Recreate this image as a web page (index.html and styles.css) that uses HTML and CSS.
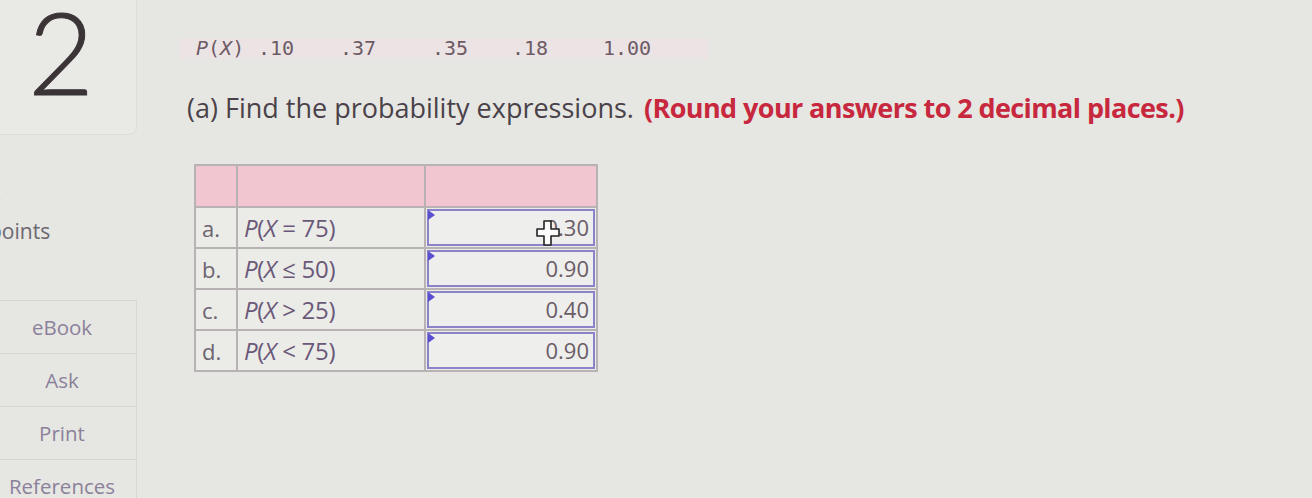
FILE: index.html
```html
<!DOCTYPE html>
<html>
<head>
<meta charset="utf-8">
<link rel="stylesheet" href="styles.css">
</head>
<body>
<div class="page">
  <aside class="sidebar">
    <div class="qnum">2</div>
    <div class="points">
      <div class="pts-num">5</div>
      <div class="pts-label">points</div>
    </div>
    <ul class="tools">
      <li>eBook</li>
      <li>Ask</li>
      <li>Print</li>
      <li>References</li>
    </ul>
  </aside>
  <main class="content">
    <div class="dist">
      <span class="c c0"><i>P</i>(<i>X</i>)</span>
      <span class="c c1">.10</span>
      <span class="c c2">.37</span>
      <span class="c c3">.35</span>
      <span class="c c4">.18</span>
      <span class="c c5">1.00</span>
    </div>
    <p class="prompt">(a) Find the probability expressions. <strong>(Round your answers to 2 decimal places.)</strong></p>
    <table class="grid">
      <tr class="head"><th class="lbl"></th><th class="expr"></th><th class="ans"></th></tr>
      <tr><td class="lbl">a.</td><td class="expr"><i>P</i>(<i>X</i> = 75)</td><td class="ans"><div class="input">0.30<span class="cursor"><svg width="26" height="28" viewBox="0 0 26 28"><path d="M9 2h7v8h8v7h-8v9H9v-9H2v-7h7z" fill="#fbfbfb" stroke="#222" stroke-width="1.6" stroke-linejoin="round"/></svg></span></div></td></tr>
      <tr><td class="lbl">b.</td><td class="expr"><i>P</i>(<i>X</i> ≤ 50)</td><td class="ans"><div class="input">0.90</div></td></tr>
      <tr><td class="lbl">c.</td><td class="expr"><i>P</i>(<i>X</i> &gt; 25)</td><td class="ans"><div class="input">0.40</div></td></tr>
      <tr><td class="lbl">d.</td><td class="expr"><i>P</i>(<i>X</i> &lt; 75)</td><td class="ans"><div class="input">0.90</div></td></tr>
    </table>
  </main>
</div>
</body>
</html>
```
FILE: styles.css
```css
html, body {
  margin: 0;
  padding: 0;
}
body {
  background: #e6e6e3;
  font-family: "Open Sans", "Liberation Sans", sans-serif;
  width: 1312px;
  height: 498px;
  overflow: hidden;
}
.page {
  display: flex;
  align-items: flex-start;
}
.sidebar {
  width: 137px;
  flex: none;
}
.qnum {
  height: 135px;
  box-sizing: border-box;
  border-right: 1px solid #dcdcd9;
  border-bottom: 1px solid #dcdcd9;
  border-bottom-right-radius: 8px;
  background: #e9e9e6;
  font-family: "Lato", sans-serif;
  font-weight: 300;
  font-size: 114px;
  line-height: 102px;
  color: #3b3437;
  padding-top: 0;
  padding-left: 28px;
  -webkit-text-stroke: 1px #3b3437;
}
.points {
  margin-left: -11px;
  height: 165px;
  box-sizing: border-box;
  padding-top: 50px;
  color: #6c6870;
  font-size: 21px;
}
.pts-num {
  line-height: 24px;
}
.pts-label {
  margin-top: 8px;
  line-height: 28px;
}
.tools {
  list-style: none;
  margin: 0;
  padding: 0;
  border-right: 1px solid #d8d8d5;
}
.tools li {
  height: 53px;
  box-sizing: border-box;
  border-top: 1px solid #d6d6d3;
  display: flex;
  align-items: center;
  justify-content: center;
  color: #8b819a;
  font-size: 20.5px;
  padding-right: 12px;
}
.content {
  padding-left: 43px;
  flex: 1;
}
.dist {
  margin-top: 38px;
  width: 528px;
  height: 21px;
  background: #ece4e4;
  font-family: "DejaVu Sans Mono", monospace;
  font-size: 20px;
  line-height: 21px;
  color: #6d5b66;
  display: flex;
}
.dist i { font-style: italic; }
.c { display: block; }
.c0 { margin-left: 16px; width: 62px; }
.c1 { width: 82px; }
.c2 { width: 92px; }
.c3 { width: 80px; }
.c4 { width: 91px; }
.prompt {
  margin: 33px 0 0 7px;
  font-size: 27px;
  line-height: 32px;
  color: #4a4249;
  letter-spacing: 0;
  white-space: nowrap;
}
.prompt strong {
  color: #c8283d;
  font-weight: 700;
  margin-left: 3px;
  letter-spacing: -0.6px;
}
.grid {
  margin: 40px 0 0 14px;
  border-collapse: collapse;
  font-size: 22px;
  color: #6b6470;
}
.grid th, .grid td {
  border: 2px solid #b9b2b4;
  padding: 0;
}
.grid .head th {
  background: #f2c6d0;
  height: 40px;
}
.grid td {
  height: 37px;
  background: #ebebe8;
}
.lbl { width: 34px; padding-left: 6px !important; text-align: left; }
.expr { width: 180px; padding-left: 6px !important; color: #6a5878; font-size: 24px; letter-spacing: -0.3px; }
.expr i { font-style: italic; }
.ans { width: 170px; }
.input {
  position: relative;
  margin: 1px;
  height: 33px;
  border: 2px solid #8c82c9;
  background: #eeeeec;
  text-align: right;
  padding-right: 4px;
  line-height: 33px;
  color: #6a5c66;
  font-size: 22px;
}
.input::before {
  content: "";
  position: absolute;
  left: -1px;
  top: -1px;
  border-left: 7px solid #5a4fd0;
  border-top: 5px solid transparent;
  border-bottom: 5px solid transparent;
}
.cursor {
  position: absolute;
  right: 32px;
  top: 8px;
  width: 26px;
  height: 28px;
}
```
